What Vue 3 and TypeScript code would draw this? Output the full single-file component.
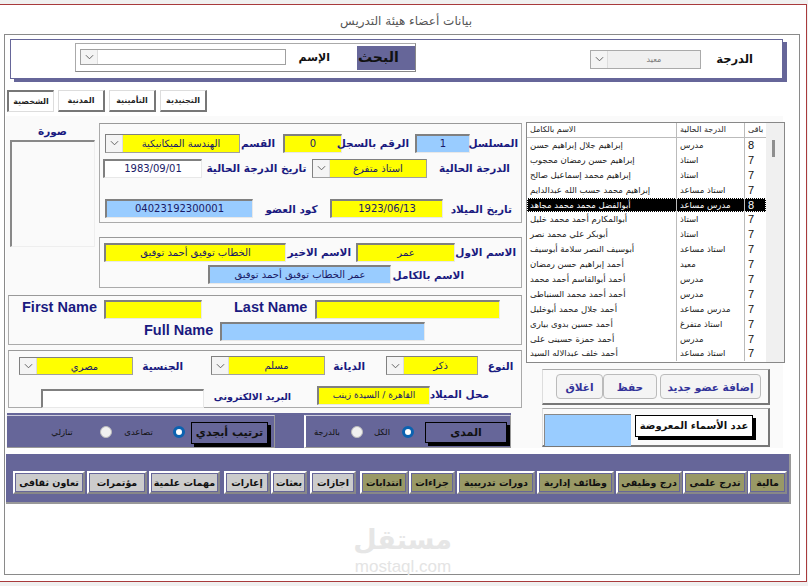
<script setup lang="ts">
interface Row { name: string; grade: string; n: string; sel?: boolean }
const rows: Row[] = [
  { name: 'إبراهيم جلال إبراهيم حسن', grade: 'مدرس', n: '8' },
  { name: 'إبراهيم حسن رمضان محجوب', grade: 'استاذ', n: '7' },
  { name: 'إبراهيم محمد إسماعيل صالح', grade: 'استاذ', n: '7' },
  { name: 'إبراهيم محمد حسب الله عبدالدايم', grade: 'استاذ مساعد', n: '7' },
  { name: 'أبوالفضل محمد محمد مجاهد', grade: 'مدرس مساعد', n: '8', sel: true },
  { name: 'أبوالمكارم أحمد محمد خليل', grade: 'استاذ', n: '7' },
  { name: 'أبوبكر علي محمد نصر', grade: 'استاذ', n: '7' },
  { name: 'أبوسيف النصر سلامة أبوسيف', grade: 'استاذ مساعد', n: '7' },
  { name: 'أحمد إبراهيم حسن رمضان', grade: 'معيد', n: '7' },
  { name: 'أحمد أبوالقاسم أحمد محمد', grade: 'مدرس', n: '7' },
  { name: 'أحمد أحمد محمد السنباطى', grade: 'مدرس', n: '7' },
  { name: 'أحمد جلال محمد أبوخليل', grade: 'مدرس مساعد', n: '7' },
  { name: 'أحمد حسين بدوى بيارى', grade: 'استاذ متفرغ', n: '7' },
  { name: 'أحمد حمزة حسينى على', grade: 'مدرس', n: '7' },
  { name: 'أحمد خلف عبدالاله السيد', grade: 'استاذ مساعد', n: '7' },
]
const tabs = [
  { t: 'الشخصية', on: true },
  { t: 'المدنية', on: false },
  { t: 'التأمينية', on: false },
  { t: 'التجنيدية', on: false },
]
const navButtons = [
  { t: 'تعاون ثقافى', w: 72, g: 0, k: false },
  { t: 'مؤتمرات', w: 60, g: 2, k: false },
  { t: 'مهمات علمية', w: 71, g: 2, k: false },
  { t: 'إعارات', w: 46, g: 4, k: false },
  { t: 'بعثات', w: 36, g: 1, k: false },
  { t: 'اجازات', w: 46, g: 3, k: false },
  { t: 'انتدابات', w: 48, g: 4, k: true },
  { t: 'جزاءات', w: 46, g: 1, k: true },
  { t: 'دورات تدريبية', w: 78, g: 2, k: true },
  { t: 'وظائف إدارية', w: 77, g: 2, k: true },
  { t: 'درج وظيفى', w: 66, g: 2, k: true },
  { t: 'تدرج علمى', w: 64, g: 1, k: true },
  { t: 'مالية', w: 39, g: 1, k: true },
]
</script>

<template>
  <div class="page">
    <div class="frame">
      <div class="title">بيانات أعضاء هيئة التدريس</div>
      <div class="inner">
        <section class="search">
          <div class="search-box">
            <span class="combo plain w206"><i class="arrow"><svg viewBox="0 0 10 6"><path d="M1 1l4 4 4-4" /></svg></i><b></b></span>
            <label class="lbl-black s-name">الإسم</label>
            <span class="search-tag">البحث</span>
          </div>
          <span class="combo disabled w111"><i class="arrow"><svg viewBox="0 0 10 6"><path d="M1 1l4 4 4-4" /></svg></i><b>معيد</b></span>
          <label class="lbl-black s-grade">الدرجة</label>
        </section>

        <nav class="tabs">
          <button v-for="t in tabs" :key="t.t" class="tab" :class="{ on: t.on }">{{ t.t }}</button>
        </nav>

        <div class="body">
          <div class="form">
            <div class="top-split">
              <aside class="photo">
                <div class="lbl photo-lbl">صورة</div>
                <div class="photo-box"></div>
              </aside>
              <div class="stack">
                <fieldset class="group g1">
                  <div class="row r1">
                    <span class="combo yellow w135"><i class="arrow"><svg viewBox="0 0 10 6"><path d="M1 1l4 4 4-4" /></svg></i><b>الهندسة الميكانيكية</b></span>
                    <label class="lbl l-a">القسم</label>
                    <span class="field yellow w59">0</span>
                    <label class="lbl l-b">الرقم بالسجل</label>
                    <span class="field blue w55">1</span>
                    <label class="lbl l-c">المسلسل</label>
                  </div>
                  <div class="row r2">
                    <span class="field white w99">1983/09/01</span>
                    <label class="lbl l-d">تاريخ الدرجة الحالية</label>
                    <span class="combo yellow w115"><i class="arrow"><svg viewBox="0 0 10 6"><path d="M1 1l4 4 4-4" /></svg></i><b>استاذ متفرغ</b></span>
                    <label class="lbl l-e">الدرجة الحالية</label>
                  </div>
                  <div class="row r3">
                    <span class="field blue w148">04023192300001</span>
                    <label class="lbl l-f">كود العضو</label>
                    <span class="field yellow w113">1923/06/13</span>
                    <label class="lbl l-g">تاريخ الميلاد</label>
                  </div>
                </fieldset>
                <fieldset class="group g2">
                  <div class="row r4">
                    <span class="field yellow w182">الخطاب توفيق أحمد توفيق</span>
                    <label class="lbl l-h">الاسم الاخير</label>
                    <span class="field yellow w99">عمر</span>
                    <label class="lbl l-i">الاسم الاول</label>
                  </div>
                  <div class="row r5">
                    <span class="field blue w183">عمر الخطاب توفيق أحمد توفيق</span>
                    <label class="lbl l-j">الاسم بالكامل</label>
                  </div>
                </fieldset>
              </div>
            </div>

            <fieldset class="group g3">
              <div class="row r6">
                <label class="lbl en l-k">First Name</label>
                <span class="field yellow w98 tall"></span>
                <label class="lbl en l-l">Last Name</label>
                <span class="field yellow w185 tall"></span>
              </div>
              <div class="row r7">
                <label class="lbl en l-m">Full Name</label>
                <span class="field blue w205 tall"></span>
              </div>
            </fieldset>

            <fieldset class="group g4">
              <div class="row r8">
                <span class="combo yellow w114"><i class="arrow"><svg viewBox="0 0 10 6"><path d="M1 1l4 4 4-4" /></svg></i><b>مصري</b></span>
                <label class="lbl l-n">الجنسية</label>
                <span class="combo yellow w114"><i class="arrow"><svg viewBox="0 0 10 6"><path d="M1 1l4 4 4-4" /></svg></i><b>مسلم</b></span>
                <label class="lbl l-o">الديانة</label>
                <span class="combo yellow w92"><i class="arrow"><svg viewBox="0 0 10 6"><path d="M1 1l4 4 4-4" /></svg></i><b>ذكر</b></span>
                <label class="lbl l-p">النوع</label>
              </div>
              <div class="row r9">
                <span class="field white w163"></span>
                <label class="lbl l-q">البريد الالكترونى</label>
                <span class="field yellow w113 small">القاهرة / السيدة زينب</span>
                <label class="lbl l-r">محل الميلاد</label>
              </div>
            </fieldset>

            <div class="filters">
              <div class="filter f-left">
                <span class="radio-text t-a">تنازلي</span>
                <span class="radio"></span>
                <span class="radio-text t-b">تصاعدى</span>
                <span class="radio on"></span>
                <span class="shadow-btn sb-a">ترتيب أبجدي</span>
              </div>
              <div class="filter f-right">
                <span class="radio-text t-c">بالدرجة</span>
                <span class="radio"></span>
                <span class="radio-text t-d">الكل</span>
                <span class="radio on"></span>
                <span class="shadow-btn sb-b">المدى</span>
              </div>
            </div>
          </div>

          <div class="side">
            <div class="list">
              <div class="list-main">
                <div class="list-row head">
                  <span class="c-name">الاسم بالكامل</span>
                  <span class="c-grade">الدرجة الحالية</span>
                  <span class="c-n">باقى</span>
                </div>
                <div v-for="r in rows" :key="r.name" class="list-row" :class="{ sel: r.sel }">
                  <span class="c-name">{{ r.name }}</span>
                  <span class="c-grade">{{ r.grade }}</span>
                  <span class="c-n num">{{ r.n }}</span>
                </div>
              </div>
              <div class="scroll"><i></i></div>
            </div>
            <div class="actions">
              <button class="act a-close">اغلاق</button>
              <button class="act a-save">حفظ</button>
              <button class="act a-add">إضافة عضو جديد</button>
            </div>
            <div class="count">
              <span class="count-val"></span>
              <span class="shadow-btn white sb-c">عدد الأسماء المعروضة</span>
            </div>
          </div>
        </div>

        <div class="nav">
          <button v-for="b in navButtons" :key="b.t" class="nav-btn" :class="{ khaki: b.k }" :style="{ width: b.w + 'px', marginLeft: b.g + 'px' }">{{ b.t }}</button>
        </div>

        <div class="mark">
          <div class="mark-ar">مستقل</div>
          <div class="mark-en">mostaql.com</div>
        </div>
      </div>
    </div>
  </div>
</template>

<style>
html, body { margin: 0; background: #f0f0f0; }
</style>

<style scoped>
* { box-sizing: border-box; }
.page {
  width: 808px; height: 586px; overflow: hidden; background: #f0f0f0;
  padding-top: 4px;
  font-family: "DejaVu Sans", "Noto Sans", sans-serif;
}
.frame {
  width: 807px; height: 578px; background: #fff;
  border-top: 1px solid #a83a3c; border-bottom: 1px solid #a83a3c; border-right: 1px solid #a83a3c;
  padding-left: 4px;
}
.title { height: 29px; padding-top: 9px; padding-left: 337px; width: 468px; text-align: center; font-size: 12px; line-height: 14px; color: #555; direction: rtl; white-space: nowrap; }
.inner { position: relative; width: 796px; height: 541px; border: 1px solid #8a8a8a; padding: 4px 0 0 5px; }

.search {
  width: 773px; height: 40px; background: #fff; border: 1px solid #666699;
  box-shadow: 4px 3px 0 #666699; display: flex; align-items: center;
  padding-left: 64px;
}
.search-box {
  width: 341px; height: 29px; margin-top: -3px; border: 1px solid #aaa; border-bottom-color: #888; border-right-color: #888;
  display: flex; align-items: center; padding-left: 4px;
}
.search-box .combo { height: 16px; margin-top: -1px; }
.s-name { margin-left: 18px; width: 26px; }
.search-tag { margin-left: 27px; width: 58px; height: 24px; background: #666699; color: #111; font-weight: 700; font-size: 14px; line-height: 22px; text-align: left; padding-left: 1px; }
.lbl-black { font-weight: 700; font-size: 11px; color: #111; direction: rtl; white-space: nowrap; text-align: center; }
.s-grade { width: 36px; margin-left: 16px; font-size: 11.5px; }
.disabled { margin-left: 174px; height: 18px; }

.combo { display: flex; flex: none; align-items: stretch; height: 19px; border: 1px solid #a0a0a0; border-top-color: #808080; border-left-color: #808080; background: #fff; }
.combo .arrow { width: 17px; flex: none; background: #f4f4f4; display: flex; align-items: center; justify-content: center; border-right: 1px solid #ddd; }
.combo .arrow svg { width: 9px; height: 6px; fill: none; stroke: #555; stroke-width: 1; }
.combo b { flex: 1; font-weight: 400; font-size: 10px; text-align: center; color: #1a1a66; line-height: 17px; direction: rtl; white-space: nowrap; overflow: hidden; }
.combo.yellow b { background: #ffff00; }
.combo.plain { background: #fff; border-color: #a0a0a0; }
.combo.disabled b { background: #f0f0f0; color: #777; font-size: 8px; }
.combo.disabled { border-color: #aaa; }

.field {
  display: block; flex: none; height: 19px; border: 1px solid #e8e8e8; border-top: 2px solid #808080; border-left: 2px solid #808080;
  font-size: 10px; line-height: 15px; text-align: center; color: #1a1a66; direction: rtl; white-space: nowrap; overflow: hidden;
}
.field.tall { height: 19px; }
.field.small { font-size: 9px; }
.yellow { background: #ffff00; }
.blue { background: #99ccff; }
.white { background: #fff; }
.w55 { width: 55px; } .w59 { width: 59px; } .w92 { width: 92px; } .w98 { width: 98px; } .w99 { width: 99px; }
.w111 { width: 111px; } .w113 { width: 113px; } .w114 { width: 114px; } .w115 { width: 115px; } .w135 { width: 135px; } .w148 { width: 148px; } .w163 { width: 163px; }
.w182 { width: 182px; } .w183 { width: 183px; } .w185 { width: 185px; } .w205 { width: 205px; } .w206 { width: 206px; }

.tabs { display: flex; gap: 4px; margin-top: 11px; margin-left: -3px; height: 22px; }
.tab {
  width: 47px; height: 22px; padding: 0; background: #fff; border: 1px solid #ddd; border-right: 2px solid #777; border-bottom: 2px solid #777;
  font-family: inherit; font-size: 8px; font-weight: 700; color: #222; direction: rtl; white-space: nowrap;
}
.tab.on { border: 1px solid #ddd; border-top: 2px solid #777; border-left: 2px solid #777; }

.body { display: flex; margin: 4px 0 0 -4px; width: 777px; height: 332px; background: #fafafa; }
.form { width: 520px; flex: none; }
.top-split { display: flex; }
.photo { width: 93px; flex: none; padding: 7px 0 0 4px; }
.photo-lbl { text-align: center; width: 85px; height: 17px; font-size: 11px; }
.photo-box { width: 85px; height: 107px; border: 1px solid #eee; border-top: 2px solid #888; border-left: 2px solid #888; background: #fafafa; }
.stack { width: 423px; flex: none; padding-top: 7px; }

.group { margin: 0; padding: 0; display: block; border: 1px solid #aaa; border-top-color: #999; background: #fafafa; }
.row { display: flex; align-items: center; }
.lbl { font-weight: 700; font-size: 10.5px; line-height: 16px; color: #1a1a80; direction: rtl; white-space: nowrap; text-align: center; flex: none; }
.lbl.en { font-family: "Liberation Sans", Arial, sans-serif; font-size: 14.5px; direction: ltr; padding-bottom: 4px; }

.g1 { height: 100px; padding: 9px 0 0 5px; }
.r1 { height: 20px; }
.l-a { width: 27px; margin: 0 8px; }
.l-b { width: 65px; margin: 0 6px 0 2px; }
.l-c { width: 43px; margin-left: 5px; }
.r2 { height: 20px; margin-top: 5px; margin-left: -2px; }
.l-d { width: 101px; margin: 0 5px 0 4px; }
.l-e { width: 71px; margin-left: 12px; }
.r3 { height: 19px; margin-top: 21px; }
.l-f { width: 57px; margin: 0 10px; }
.l-g { width: 60px; margin-left: 9px; }
.g2 { height: 51px; margin-top: 14px; padding: 4px 0 0 4px; }
.r4 { height: 20px; }
.l-h { width: 58px; margin: 0 5px 0 7px; }
.l-i { width: 54px; margin-left: 7px; }
.r5 { height: 19px; margin-top: 3px; margin-left: 104px; }
.l-j { width: 64px; margin-left: 9px; }

.g3 { width: 514px; height: 50px; margin: 7px 0 0 2px; padding: 3px 0 0 13px; }
.r6 { height: 20px; }
.l-k { width: 75px; margin-right: 7px; }
.l-l { width: 73px; margin: 0 8px 0 32px; }
.r7 { height: 19px; margin-top: 3px; margin-left: 122px; }
.l-m { width: 68px; margin-right: 8px; }
.g4 { width: 514px; height: 58px; margin: 5px 0 0 2px; padding: 3px 0 0 10px; }
.r8 { height: 23px; }
.l-n { width: 38px; margin: 0 28px 0 12px; }
.l-o { width: 31px; margin: 0 21px 0 9px; }
.l-p { width: 27px; margin-left: 9px; }
.r8 .combo:nth-of-type(1) { height: 18px; }
.r9 { height: 24px; margin: 7px 0 0 22px; align-items: flex-end; }
.l-q { width: 79px; margin: 0 25px 0 9px; padding-bottom: 3px; font-size: 9.5px; }
.r9 .field.yellow { margin-bottom: 3px; }
.l-r { width: 55px; margin-left: 4px; padding-bottom: 6px; }

.filters { display: flex; width: 504px; height: 35px; margin: 5px 0 0 1px; padding-top: 2px; background: #666699; }
.filter { display: flex; align-items: center; height: 33px; flex: none; border-bottom: 1px solid #999; border-top: 1px solid #ccccdd; }
.f-left { width: 268px; border-right: 1px solid #999; padding-left: 44px; }
.f-right { width: 207px; margin-left: 29px; border-left: 2px solid #fff; border-right: 1px solid #999; padding-left: 7px; }
.radio-text { font-size: 8.5px; color: #111; direction: rtl; white-space: nowrap; flex: none; text-align: center; }
.radio { flex: none; width: 12px; height: 12px; border-radius: 50%; background: #f0f0f0; border: 1px solid #bbb; }
.radio.on { background: #fff; border: 3px solid #0b62b0; box-shadow: inset 0 0 0 1px #fff; }
.t-a { width: 22px; margin-right: 27px; }
.t-b { width: 33px; margin: 0 18px 0 10px; }
.sb-a { width: 77px; height: 22px; margin: 2px 0 0 6px; }
.t-c { width: 28px; margin-right: 10px; }
.t-d { width: 16px; margin: 0 12px 0 11px; }
.sb-b { width: 82px; height: 21px; margin: 2px 0 0 11px; }
.shadow-btn {
  flex: none; display: block; background: #666699; border: 1px solid #000; box-shadow: 3px 3px 0 #000;
  font-weight: 700; font-size: 11px; line-height: 20px; text-align: center; color: #111; direction: rtl; white-space: nowrap;
}
.shadow-btn.white { background: #fff; }

.side { width: 256px; flex: none; padding: 6px 0 0 0; }
.list { width: 259px; height: 241px; display: flex; border: 1px solid #888; background: #f0f0f0; }
.list-main { width: 239px; flex: none; background: #fff; overflow: hidden; }
.list-row { display: grid; grid-template-columns: 150px 68px 21px; height: 14.9px; font-size: 8.5px; line-height: 14.5px; color: #222; align-items: center; }
.list-row span { padding-left: 3px; direction: rtl; text-align: left; white-space: nowrap; overflow: hidden; border-right: 1px solid #bbb; height: 100%; }
.list-row .c-n { border-right: 0; padding-left: 3px; }
.list-row .num { font-family: "Liberation Sans", Arial, sans-serif; font-size: 11px; direction: ltr; color: #111; }
.list-row.head { height: 15px; border-bottom: 1px solid #bbb; font-size: 8px; }
.list-row.sel { background: #000; color: #fff; outline: 1px dotted #fff; outline-offset: -1px; }
.list-row.sel .num { color: #fff; }
.scroll { flex: 1; padding: 17px 0 0 6px; }
.scroll i { display: block; width: 3px; height: 17px; background: #8f8f8f; }

.actions {
  width: 228px; height: 36px; margin: 6px 0 0 16px; display: flex; align-items: center; padding-left: 13px;
  border: 1px solid #ddd; border-right: 2px solid #777; border-bottom: 2px solid #777; border-top-color: #aaa; gap: 0;
}
.act {
  height: 25px; padding: 0; background: #f4f4f4; border: 1px solid #bbb; border-radius: 4px; flex: none;
  font-family: inherit; font-weight: 700; font-size: 10.5px; color: #333399; direction: rtl; white-space: nowrap;
}
.a-close { width: 47px; }
.a-save { width: 54px; }
.a-add { width: 101px; margin-left: 3px; }
.count {
  width: 228px; height: 39px; margin: 3px 0 0 16px; display: flex; padding: 5px 0 0 1px;
  border: 1px solid #ddd; border-right: 2px solid #777; border-bottom: 2px solid #777; border-top-color: #aaa;
}
.count-val { width: 87px; height: 32px; background: #99ccff; border: 1px solid #888; border-bottom: 0; border-right: 0; flex: none; }
.sb-c { width: 118px; height: 22px; margin: 1px 0 0 4px; font-size: 10px; line-height: 20px; }

.nav {
  width: 785px; height: 50px; margin: 6px 0 0 -4px; background: #666699; border-right: 2px solid #999; border-bottom: 2px solid #999;
  display: flex; padding: 17px 0 0 7px; align-items: flex-start;
}
.nav-btn {
  flex: none; height: 23px; padding: 0; background: #cccccc; border: 2px solid #fff; border-right-color: #888; border-bottom-color: #888; outline: 1px solid #666699; outline-offset: -3px;
  font-family: inherit; font-weight: 700; font-size: 9.5px; color: #111; direction: rtl; white-space: nowrap; overflow: hidden;
}
.nav-btn.khaki { background: #999966; }

.mark { position: absolute; left: 349px; top: 486px; width: 98px; text-align: center; color: #e6e6e6; }
.mark-ar { font-weight: 700; font-size: 27px; line-height: 38px; direction: rtl; white-space: nowrap; }
.mark-en { font-family: "Liberation Sans", Arial, sans-serif; font-size: 17px; line-height: 15px; color: #e4e4e4; white-space: nowrap; }
</style>
